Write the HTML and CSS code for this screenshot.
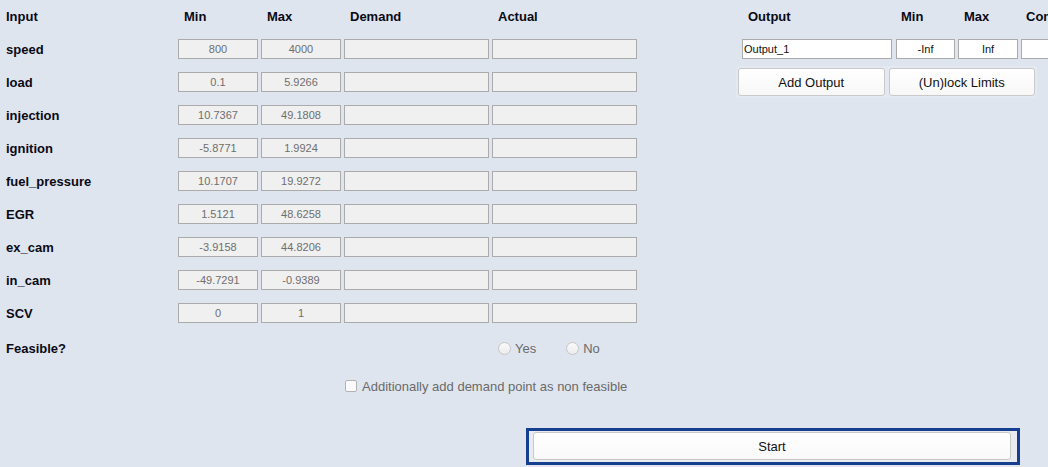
FILE: index.html
```html
<!DOCTYPE html>
<html>
<head>
<meta charset="utf-8">
<link rel="stylesheet" href="styles.css">
</head>
<body>
<div class="page">
  <div class="top">
    <div class="left">
      <div class="grid">
        <div class="hd">Input</div>
        <div class="hd col">Min</div>
        <div class="hd col">Max</div>
        <div class="hd col">Demand</div>
        <div class="hd col">Actual</div>

        <div class="lbl">speed</div><div class="box">800</div><div class="box">4000</div><div class="box"></div><div class="box"></div>
        <div class="lbl">load</div><div class="box">0.1</div><div class="box">5.9266</div><div class="box"></div><div class="box"></div>
        <div class="lbl">injection</div><div class="box">10.7367</div><div class="box">49.1808</div><div class="box"></div><div class="box"></div>
        <div class="lbl">ignition</div><div class="box">-5.8771</div><div class="box">1.9924</div><div class="box"></div><div class="box"></div>
        <div class="lbl">fuel_pressure</div><div class="box">10.1707</div><div class="box">19.9272</div><div class="box"></div><div class="box"></div>
        <div class="lbl">EGR</div><div class="box">1.5121</div><div class="box">48.6258</div><div class="box"></div><div class="box"></div>
        <div class="lbl">ex_cam</div><div class="box">-3.9158</div><div class="box">44.8206</div><div class="box"></div><div class="box"></div>
        <div class="lbl">in_cam</div><div class="box">-49.7291</div><div class="box">-0.9389</div><div class="box"></div><div class="box"></div>
        <div class="lbl">SCV</div><div class="box">0</div><div class="box">1</div><div class="box"></div><div class="box"></div>
      </div>
      <div class="feasible">
        <div class="lbl">Feasible?</div>
        <div class="radios">
          <span class="opt"><span class="radio"></span>Yes</span>
          <span class="opt opt-no"><span class="radio"></span>No</span>
        </div>
      </div>
      <div class="check-row">
        <span class="check"></span><span class="check-text">Additionally add demand point as non feasible</span>
      </div>
    </div>
    <div class="right">
      <div class="ogrid">
        <div class="hd col">Output</div>
        <div class="hd col">Min</div>
        <div class="hd col">Max</div>
        <div class="hd col">Constraint</div>
        <div class="obox name">Output_1</div>
        <div class="obox">-Inf</div>
        <div class="obox">Inf</div>
        <div class="obox"></div>
      </div>
      <div class="btns">
        <div class="btn">Add Output</div>
        <div class="btn">(Un)lock Limits</div>
      </div>
    </div>
  </div>
  <div class="start-wrap">
    <div class="start">Start</div>
  </div>
</div>
</body>
</html>
```

FILE: styles.css
```css
html, body {
  margin: 0;
  padding: 0;
  overflow: hidden;
  background: #dfe5ef;
}
body {
  width: 1048px;
  height: 467px;
  font-family: "Liberation Sans", Arial, sans-serif;
  color: #000;
}
.page {
  width: 1048px;
  height: 467px;
  overflow: hidden;
}
.top {
  display: flex;
}
.left {
  width: 631px;
  padding-left: 6px;
  flex: none;
}
.grid {
  display: grid;
  grid-template-columns: 169px 80px 80px 145px 145px;
  grid-template-rows: repeat(10, 20px);
  column-gap: 3px;
  row-gap: 13px;
  padding-top: 6px;
}
.hd {
  font-weight: bold;
  font-size: 13px;
  line-height: 22px;
  height: 20px;
  color: #0a0a14;
  white-space: nowrap;
}
.col {
  padding-left: 6px;
}
.lbl {
  font-weight: bold;
  font-size: 13px;
  line-height: 22px;
  height: 20px;
  color: #0a0a14;
}
.box {
  box-sizing: border-box;
  height: 20px;
  border: 1px solid #ababab;
  background: #f0f0f0;
  font-size: 11px;
  line-height: 19px;
  text-align: center;
  color: #6e6e6e;
}
.feasible {
  display: flex;
  margin-top: 15px;
  height: 20px;
}
.feasible .lbl {
  width: 492px;
  flex: none;
}
.radios {
  display: flex;
  align-items: center;
}
.opt {
  display: flex;
  align-items: center;
  font-size: 13px;
  color: #6a6a6a;
  padding-top: 1px;
}
.opt-no {
  margin-left: 30px;
}
.radio {
  box-sizing: border-box;
  width: 13px;
  height: 13px;
  border-radius: 50%;
  border: 1px solid #c6c6c6;
  background: linear-gradient(#fafafa, #ececec);
  margin-right: 4px;
}
.check-row {
  display: flex;
  align-items: center;
  margin-top: 18px;
  height: 20px;
  padding-left: 339px;
}
.check {
  box-sizing: border-box;
  width: 12px;
  height: 12px;
  border: 1px solid #b3b3b3;
  border-radius: 2px;
  background: #fafafa;
  margin-right: 5px;
}
.check-text {
  font-size: 13px;
  color: #6a6a6a;
}
.right {
  margin-left: 99px;
  flex: none;
  width: 312px;
  overflow: hidden;
}
.ogrid {
  display: grid;
  grid-template-columns: 151px 59px 60px 60px;
  grid-template-rows: 20px 20px;
  column-gap: 3px;
  row-gap: 13px;
  padding-top: 6px;
  padding-left: 6px;
}
.ogrid > .col:nth-child(2) {
  padding-left: 5px;
}
.ogrid > .col:nth-child(4) {
  padding-left: 5px;
}
.obox {
  box-sizing: border-box;
  height: 20px;
  border: 1px solid #ababab;
  background: #fff;
  font-size: 11px;
  line-height: 19px;
  text-align: center;
  color: #111;
}
.obox.name {
  width: 150px;
  text-align: left;
  padding-left: 1px;
}
.btns {
  display: flex;
  gap: 4px;
  width: 297px;
  padding: 2px;
  margin-top: 7px;
  background: #e4e9f1;
}
.btn {
  box-sizing: border-box;
  width: 147px;
  height: 28px;
  border: 1px solid #c9c9c9;
  border-radius: 3px;
  background: linear-gradient(#ffffff, #f7f7f7);
  font-size: 13px;
  line-height: 27px;
  text-align: center;
  color: #111;
}
.start-wrap {
  box-sizing: border-box;
  width: 494px;
  height: 37px;
  margin-top: 32px;
  margin-left: 526px;
  border: 3px solid #173f8f;
  background: #e9ebee;
  padding: 1px 6px 2px 4px;
}
.start {
  box-sizing: border-box;
  height: 28px;
  border: 1px solid #c9c9c9;
  border-radius: 3px;
  background: linear-gradient(#ffffff, #f9f9f9);
  font-size: 13px;
  line-height: 27px;
  text-align: center;
  color: #111;
}
```
